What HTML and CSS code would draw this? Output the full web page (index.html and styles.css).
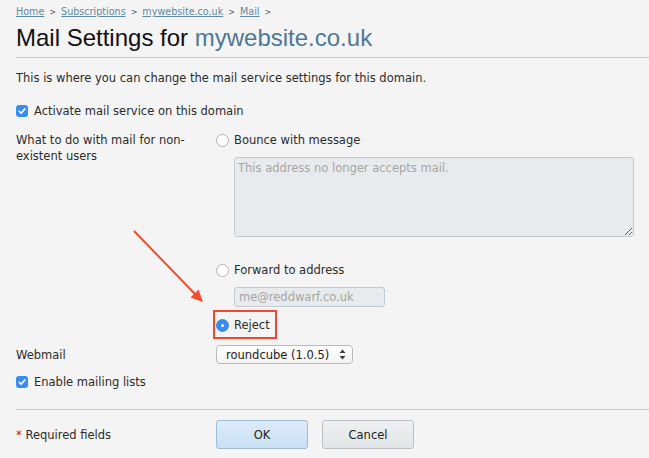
FILE: index.html
```html
<!DOCTYPE html>
<html lang="en">
<head>
<meta charset="utf-8">
<title>Mail Settings for mywebsite.co.uk</title>
<link rel="stylesheet" href="styles.css">
</head>
<body>
<div class="page">
  <nav class="crumbs">
    <a href="#">Home</a><span class="sep">&gt;</span><a href="#">Subscriptions</a><span class="sep">&gt;</span><a href="#">mywebsite.co.uk</a><span class="sep">&gt;</span><a href="#">Mail</a><span class="sep">&gt;</span>
  </nav>
  <h1 class="title">Mail Settings for <a href="#">mywebsite.co.uk</a></h1>
  <hr class="rule">
  <p class="intro">This is where you can change the mail service settings for this domain.</p>

  <div class="form">
    <label class="check-row">
      <span class="checkbox"><svg width="12" height="12" viewBox="0 0 12 12"><rect width="12" height="12" rx="3" fill="#3b8cf0"/><path d="M3.2 6.3 L5.1 8.2 L8.9 3.9" fill="none" stroke="#fff" stroke-width="1.6" stroke-linecap="round" stroke-linejoin="round"/></svg></span>
      <span>Activate mail service on this domain</span>
    </label>

    <div class="field">
      <div class="field-label">What to do with mail for non-existent users</div>
      <div class="options">
        <label class="radio-row"><span class="radio"></span><span>Bounce with message</span></label>
        <textarea class="textarea" readonly>This address no longer accepts mail.</textarea>
        <label class="radio-row forward"><span class="radio"></span><span>Forward to address</span></label>
        <input class="text-input" type="text" value="me@reddwarf.co.uk" readonly>
        <label class="radio-row reject highlight"><span class="radio checked"></span><span>Reject</span></label>
      </div>
    </div>

    <div class="field webmail">
      <div class="field-label">Webmail</div>
      <div class="select">
        <span>roundcube (1.0.5)</span>
        <svg class="select-arrows" width="7" height="11" viewBox="0 0 7 11"><path d="M3.5 0.5 L6.5 4 L0.5 4 Z M3.5 10.5 L6.5 7 L0.5 7 Z" fill="#3c3c3c"/></svg>
      </div>
    </div>

    <label class="check-row lists">
      <span class="checkbox"><svg width="12" height="12" viewBox="0 0 12 12"><rect width="12" height="12" rx="3" fill="#3b8cf0"/><path d="M3.2 6.3 L5.1 8.2 L8.9 3.9" fill="none" stroke="#fff" stroke-width="1.6" stroke-linecap="round" stroke-linejoin="round"/></svg></span>
      <span>Enable mailing lists</span>
    </label>
  </div>

  <hr class="rule bottom">

  <div class="footer">
    <div class="required"><span class="star">*</span> Required fields</div>
    <div class="buttons">
      <button class="btn ok" type="button">OK</button>
      <button class="btn cancel" type="button">Cancel</button>
    </div>
  </div>
</div>

<svg class="annotation" width="649" height="458" viewBox="0 0 649 458">
  <line x1="134" y1="231" x2="196" y2="295" stroke="#f04e2f" stroke-width="2"/>
  <polygon points="203,302 190.5,297.5 198.5,289.5" fill="#f04e2f"/>
</svg>
</body>
</html>
```

FILE: styles.css
```css
html, body {
  margin: 0;
  padding: 0;
}

body {
  background: #f4f4f4;
  font-family: "DejaVu Sans", Verdana, sans-serif;
  font-size: 11.5px;
  line-height: 16px;
  color: #2b2b2b;
  position: relative;
  width: 649px;
  height: 458px;
  overflow: hidden;
}

.page {
  padding-left: 16px;
}

.crumbs {
  padding-top: 4px;
  font-size: 9.6px;
  line-height: 16px;
  color: #555;
}

.crumbs a {
  color: #5f88a8;
  text-decoration: underline;
}

.sep {
  font-size: 8px;
  margin: 0 5px;
  color: #555;
}

.title {
  margin: 3px 0 0;
  font-family: "Liberation Sans", Arial, sans-serif;
  font-weight: 400;
  font-size: 24px;
  line-height: 28px;
  color: #111;
}

.title a {
  color: #4d7898;
  text-decoration: none;
}

.rule {
  border: 0;
  border-top: 1px solid #cbcbcb;
  height: 0;
  margin: 5px 0 0;
}

.intro {
  margin: 12px 0 0;
}

.check-row {
  display: flex;
  align-items: center;
  gap: 6px;
  margin-top: 17px;
}

.checkbox {
  width: 12px;
  height: 12px;
  display: block;
  flex: none;
}

.checkbox svg {
  display: block;
}

.field {
  display: flex;
  margin-top: 13px;
}

.field-label {
  width: 200px;
  flex: none;
  padding-right: 10px;
  box-sizing: border-box;
}

.options {
  display: flex;
  flex-direction: column;
  align-items: flex-start;
}

.radio-row {
  display: flex;
  align-items: center;
  gap: 5px;
}

.radio {
  width: 13px;
  height: 13px;
  border-radius: 50%;
  border: 1px solid #b3b3b3;
  background: #fff;
  box-sizing: border-box;
  flex: none;
  position: relative;
}

.radio.checked {
  background: #3b8cf0;
  border-color: #3b8cf0;
}

.radio.checked::after {
  content: "";
  position: absolute;
  left: 4px;
  top: 4px;
  width: 3px;
  height: 3px;
  border-radius: 50%;
  background: #fff;
}

.textarea {
  margin: 9px 0 0 18px;
  width: 400px;
  height: 80px;
  box-sizing: border-box;
  background: #e7ebee;
  border: 1px solid #c2cad1;
  border-radius: 3px;
  padding: 2px 3px;
  font-family: inherit;
  font-size: 11.5px;
  line-height: 16px;
  color: #a6a6a0;
  outline: none;
  resize: both;
}

.forward {
  margin-top: 25px;
}

.text-input {
  margin: 9px 0 0 18px;
  width: 151px;
  height: 20px;
  box-sizing: border-box;
  background: #e7ebee;
  border: 1px solid #c2cad1;
  border-radius: 3px;
  padding: 0 4px;
  font-family: inherit;
  font-size: 11.5px;
  color: #a6a6a0;
  outline: none;
}

.reject {
  margin-top: 10px;
}

.highlight {
  position: relative;
}

.highlight::after {
  content: "";
  position: absolute;
  left: -3px;
  top: -7px;
  right: -7px;
  bottom: -6px;
  border: 2px solid #ee4a2c;
}

.webmail {
  margin-top: 12px;
  align-items: center;
}

.select {
  width: 137px;
  height: 19px;
  box-sizing: border-box;
  border: 1px solid #b9b9b9;
  border-radius: 4px;
  background: linear-gradient(#ffffff, #f3f3f3);
  display: flex;
  align-items: center;
  justify-content: space-between;
  padding: 0 6px 0 9px;
  color: #222;
}

.select-arrows {
  display: block;
}

.lists {
  margin-top: 10px;
}

.rule.bottom {
  margin-top: 19px;
}

.footer {
  display: flex;
  align-items: center;
  margin-top: 10px;
}

.required {
  width: 200px;
  flex: none;
}

.star {
  color: #c62020;
}

.buttons {
  display: flex;
  gap: 14px;
}

.btn {
  width: 92px;
  height: 29px;
  box-sizing: border-box;
  border-radius: 3px;
  font-family: inherit;
  font-size: 11.5px;
  color: #222;
  padding: 0;
}

.btn.ok {
  background: linear-gradient(#dcebf8, #c9e0f4);
  border: 1px solid #9ebcd7;
}

.btn.cancel {
  background: linear-gradient(#eef0f1, #e2e5e7);
  border: 1px solid #babfc4;
}

.annotation {
  position: absolute;
  left: 0;
  top: 0;
  pointer-events: none;
}
```
